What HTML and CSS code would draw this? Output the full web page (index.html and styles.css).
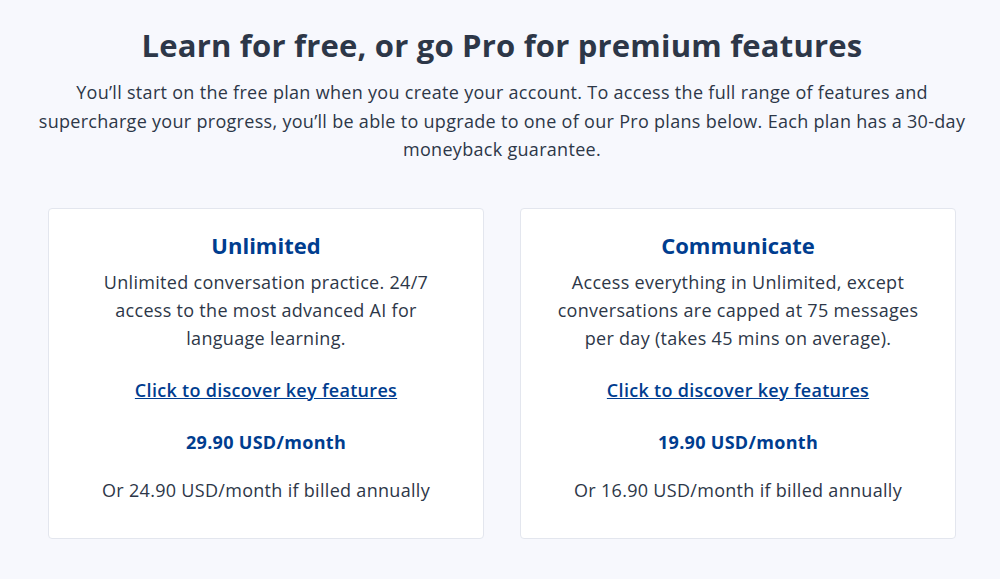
FILE: index.html
```html
<!DOCTYPE html>
<html lang="en">

<head>
  <meta charset="UTF-8">
  <meta name="viewport" content="width=device-width, initial-scale=1.0">
  <title>Pricing</title>
  <link rel="stylesheet" href="styles.css">
</head>

<body>

  <div class="container">
    <h2 class="title">Learn for free, or go Pro for premium features</h2>
    <p class="intro">You’ll start on the free plan when you create your account. To access the full range of features and supercharge your progress, you’ll be able to upgrade to one of our Pro plans below. Each plan has a 30-day moneyback guarantee.</p>

    <div class="plans">
      <div class="plan">
        <h3 class="plan-name">Unlimited</h3>
        <p class="plan-desc">Unlimited conversation practice. 24/7 access to the most advanced AI for language learning.</p>
        <a class="plan-link" href="#">Click to discover key features</a>
        <p class="plan-price">29.90 USD/month</p>
        <p class="plan-annual">Or 24.90 USD/month if billed annually</p>
      </div>

      <div class="plan">
        <h3 class="plan-name">Communicate</h3>
        <p class="plan-desc">Access everything in Unlimited, except conversations are capped at 75 messages per day (takes 45 mins on average).</p>
        <a class="plan-link" href="#">Click to discover key features</a>
        <p class="plan-price">19.90 USD/month</p>
        <p class="plan-annual">Or 16.90 USD/month if billed annually</p>
      </div>
    </div>
  </div>

</body>

</html>
```

FILE: styles.css
```css
* {
  margin: 0;
  padding: 0;
  box-sizing: border-box;
}

body {
  background: #f7f8fd;
  color: #2d3748;
  font-family: "Open Sans", "Noto Sans", sans-serif;
}

.container {
  width: 930px;
  margin: 0 0 0 37px;
  padding-top: 25px;
  text-align: center;
}

.title {
  font-size: 31px;
  font-weight: 700;
  line-height: 40px;
  letter-spacing: 0.2px;
  color: #2d3748;
}

.intro {
  margin-top: 13px;
  font-size: 18px;
  line-height: 28.5px;
  letter-spacing: 0.3px;
}

.plans {
  display: grid;
  grid-template-columns: 1fr 1fr;
  gap: 36px;
  margin: 44px 11px 0;
}

.plan {
  display: flex;
  flex-direction: column;
  align-items: center;
  background: #fff;
  border: 1px solid #e3e6ee;
  border-radius: 4px;
  padding: 22px 30px 34px;
  letter-spacing: 0.3px;
}

.plan-name {
  font-size: 22px;
  font-weight: 700;
  line-height: 28px;
  letter-spacing: 0;
  color: #003d8f;
}

.plan-desc {
  margin-top: 9px;
  font-size: 18px;
  line-height: 28px;
}

.plan-link {
  margin-top: 24px;
  font-size: 18px;
  font-weight: 600;
  line-height: 28px;
  color: #003d8f;
  text-decoration: underline;
}

.plan-price {
  margin-top: 24px;
  font-size: 18px;
  font-weight: 700;
  line-height: 28px;
  color: #003d8f;
}

.plan-annual {
  margin-top: 20px;
  font-size: 18px;
  line-height: 28px;
}
```
